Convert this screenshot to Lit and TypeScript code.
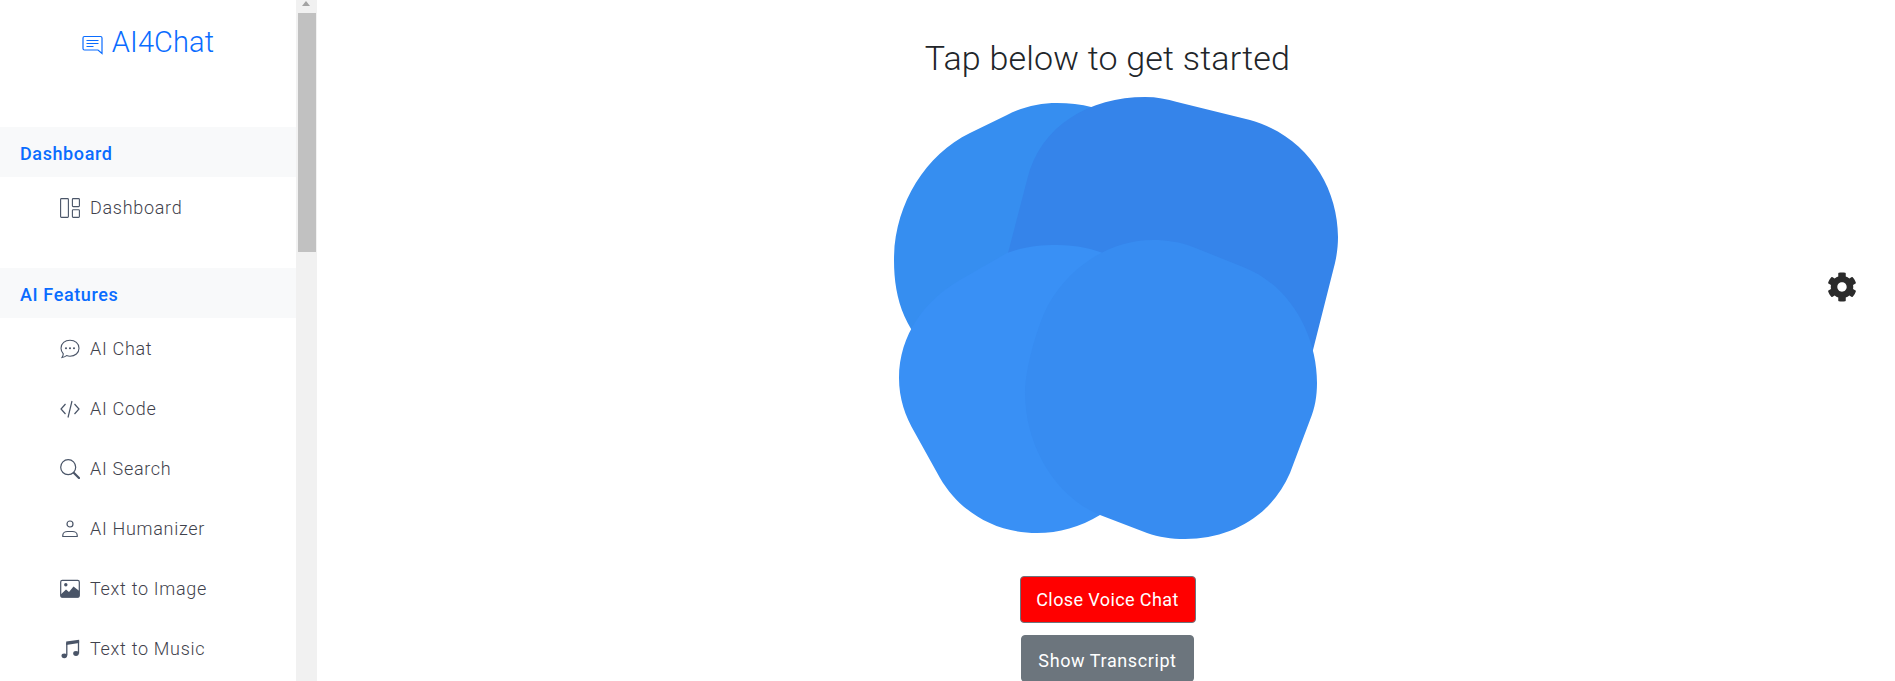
import { LitElement, html, css, svg } from 'lit';
import { customElement } from 'lit/decorators.js';

const icons: Record<string, unknown> = {
  dashboard: svg`<g fill="none" stroke="currentColor" stroke-width="1.100"><rect x=".6" y=".6" width="7.800" height="18.800" rx=".8"/><rect x="12.400" y=".6" width="7" height="8" rx=".8"/><rect x="12.400" y="11.800" width="7" height="7.600" rx=".8"/></g>`,
  chat: svg`<path fill="none" stroke="currentColor" stroke-width="1.100" d="M10 1.200c5 0 9 3.300 9 8s-4 8-9 8c-1.200 0-2.400-.2-3.400-.6-1.200.9-2.800 1.700-4.600 1.900.8-1.100 1.200-2.300 1.300-3.700C2 13.200 1 11.300 1 9.200c0-4.700 4-8 9-8z"/><circle cx="6" cy="9.200" r="1.050" fill="currentColor"/><circle cx="10" cy="9.200" r="1.050" fill="currentColor"/><circle cx="14" cy="9.200" r="1.050" fill="currentColor"/>`,
  code: svg`<path fill="none" stroke="currentColor" stroke-width="1.200" d="M5.500 5 1 10l4.500 5M14.500 5 19 10l-4.500 5M12 2 8 18.500"/>`,
  search: svg`<circle cx="8.200" cy="8.200" r="7.500" fill="none" stroke="currentColor" stroke-width="1.200"/><path stroke="currentColor" stroke-width="2.200" stroke-linecap="round" d="m14 14 5 5"/>`,
  user: svg`<circle cx="10" cy="5" r="3" fill="none" stroke="currentColor" stroke-width="1.200"/><path fill="none" stroke="currentColor" stroke-width="1.200" d="M2.800 17.500v-1.300c0-2.200 2.300-3.700 4.700-3.700h5c2.400 0 4.700 1.500 4.700 3.700v1.300z"/>`,
  image: svg`<rect x=".7" y="1.300" width="18.600" height="16.800" rx="1.600" fill="none" stroke="currentColor" stroke-width="1.200"/><path fill="currentColor" d="M.7 15.500 6 10.500l3 2.500 4.500-5.500 5.800 4.500v5a1.500 1.500 0 0 1-1.500 1.600H2.200a1.500 1.500 0 0 1-1.500-1.600z"/><circle cx="5.800" cy="5.800" r="1.700" fill="currentColor"/>`,
  music: svg`<path fill="none" stroke="currentColor" stroke-width="1.300" d="M6.800 16.500V4.200L18.500 2.400v12"/><path fill="currentColor" d="M6.200 2.600 19.100 .8v3.200L6.200 6z"/><ellipse cx="4.300" cy="16.800" rx="2.800" ry="2.400" fill="currentColor"/><ellipse cx="16" cy="14.500" rx="2.800" ry="2.400" fill="currentColor"/>`,
};

const groups = [
  { title: 'Dashboard', items: [{ label: 'Dashboard', icon: 'dashboard' }] },
  {
    title: 'AI Features',
    items: [
      { label: 'AI Chat', icon: 'chat' },
      { label: 'AI Code', icon: 'code' },
      { label: 'AI Search', icon: 'search' },
      { label: 'AI Humanizer', icon: 'user' },
      { label: 'Text to Image', icon: 'image' },
      { label: 'Text to Music', icon: 'music' },
    ],
  },
];

@customElement('app-root')
export class AppRoot extends LitElement {
  static styles = css`
    :host {
      display: flex;
      height: 681px;
      overflow: hidden;
      background: #fff;
      font-family: Roboto, 'Liberation Sans', sans-serif;
    }
    .sidebar {
      width: 296px;
      flex: none;
      height: 681px;
      overflow: hidden;
    }
    .brand {
      height: 127px;
      display: flex;
      justify-content: center;
      align-items: flex-start;
      padding-top: 25px;
      box-sizing: border-box;
      gap: 9px;
      color: #0a6cff;
      font-size: 29px;
      font-weight: 300;
      line-height: 34px;
      letter-spacing: 0.1px;
    }
    .brand svg {
      width: 21px;
      height: 21px;
      margin-top: 10px;
    }
    .group {
      margin-bottom: 31px;
    }
    .group-title {
      height: 50px;
      padding: 2px 0 0 20px;
      box-sizing: border-box;
      display: flex;
      align-items: center;
      background: #f8f9fa;
      color: #0a6cff;
      font-size: 18px;
      font-weight: 500;
      letter-spacing: 0.6px;
    }
    .item {
      height: 60px;
      padding: 1px 0 0 60px;
      box-sizing: border-box;
      display: flex;
      align-items: center;
      gap: 10px;
      color: #3f424c;
      font-size: 18px;
      font-weight: 300;
      letter-spacing: 0.7px;
    }
    .item svg {
      width: 20px;
      height: 20px;
      flex: none;
      color: #4a5568;
    }
    .track {
      width: 21px;
      flex: none;
      height: 681px;
      background: #f1f1f1;
      padding: 13px 1px 0 2px;
      box-sizing: border-box;
      position: relative;
    }
    .arrow {
      position: absolute;
      top: 1px;
      left: 6px;
      border: 4.500px solid transparent;
      border-top: 0;
      border-bottom: 5px solid #a3a3a3;
    }
    .thumb {
      height: 239px;
      background: #c1c1c1;
    }
    main {
      flex: 1;
      min-width: 0;
      position: relative;
      display: flex;
      flex-direction: column;
      align-items: center;
      padding-left: 3px;
    }
    h2 {
      margin: 38px 0 0;
      font-size: 34px;
      font-weight: 300;
      line-height: 41px;
      color: #212529;
      letter-spacing: 0.2px;
    }
    .blobs {
      width: 456px;
      height: 453px;
      margin: 13px 0 0 17px;
      flex: none;
      display: block;
    }
    .btn {
      flex: none;
      border: 1px solid #6c757d;
      border-radius: 4px;
      color: #fff;
      font: 400 18px/27px Roboto, 'Liberation Sans', sans-serif;
      letter-spacing: 0.4px;
      padding: 9px 0;
      box-sizing: border-box;
    }
    .btn.red {
      background: #ff0000;
      margin-top: 31px;
      width: 176px;
      height: 47px;
    }
    .btn.gray {
      background: #6c757d;
      margin-top: 12px;
      width: 173px;
      height: 47px;
      padding-top: 11px;
      letter-spacing: 0.6px;
    }
    .gear {
      position: absolute;
      left: 1510px;
      top: 272px;
      width: 30px;
      height: 30px;
      fill: #2b2b2b;
    }
  `;

  render() {
    return html`
      <aside class="sidebar">
        <div class="brand">
          <svg viewBox="0 0 21 21">
            <path fill="none" stroke="#0a6cff" stroke-width="1.200" d="M2.500 1.500h16a1.500 1.500 0 0 1 1.500 1.500v15.500l-4-3.500H2.500A1.500 1.500 0 0 1 1 13.500V3a1.500 1.500 0 0 1 1.500-1.500z"/>
            <path stroke="#0a6cff" stroke-width="1.200" d="M4.500 5.500h12M4.500 8.500h12M4.500 11.500h7"/>
          </svg>
          <span>AI4Chat</span>
        </div>
        ${groups.map(
          (g) => html`
            <div class="group">
              <div class="group-title">${g.title}</div>
              ${g.items.map(
                (it) => html`
                  <div class="item">
                    <svg viewBox="0 0 20 20">${icons[it.icon]}</svg>
                    <span>${it.label}</span>
                  </div>
                `
              )}
            </div>
          `
        )}
      </aside>
      <div class="track"><div class="arrow"></div><div class="thumb"></div></div>
      <main>
        <h2>Tap below to get started</h2>
        <svg class="blobs" viewBox="888 92 456 453">
          <path fill="#368ef0" d="M1057 103C1105 103 1150 125 1180 170C1210 230 1205 300 1160 350C1100 400 1000 390 945 365C905 335 894 300 894 260C894 205 925 155 970 133L1007 115C1022 107 1040 103 1057 103Z"/>
          <path fill="#3584ea" d="M1145 97C1157 97 1167 99 1177 102L1250 120C1305 135 1338 185 1338 237C1338 246 1337 254 1335 263L1313 350C1290 420 1200 440 1120 420C1040 390 1000 320 1008 253L1027 180C1040 125 1090 97 1145 97Z"/>
          <path fill="#3990f5" d="M1057 245C1105 245 1150 270 1175 315C1200 390 1180 480 1100 515C1080 527 1059 533 1037 533C995 533 960 512 940 478L915 433C905 416 899 398 899 378C899 335 925 300 960 280L1007 253C1022 247 1040 245 1057 245Z"/>
          <path fill="#378cf1" d="M1153 240C1167 240 1180 242 1193 247L1243 267C1290 285 1317 335 1317 383C1317 396 1315 408 1310 420L1290 473C1272 515 1232 539 1185 539C1171 539 1159 537 1147 533L1100 515C1055 497 1025 445 1025 393C1025 370 1036 330 1047 307C1068 268 1108 240 1153 240Z"/>
        </svg>
        <button class="btn red">Close Voice Chat</button>
        <button class="btn gray">Show Transcript</button>
        <svg class="gear" viewBox="0 0 512 512">
          <path d="M487.400 315.700l-42.600-24.600c4.300-23.200 4.300-47 0-70.200l42.600-24.600c4.900-2.800 7.100-8.600 5.500-14-11.100-35.600-30-67.800-54.700-94.600-3.800-4.100-10-5.100-14.800-2.300L380.800 110c-17.900-15.400-38.500-27.300-60.800-35.100V25.800c0-5.600-3.900-10.500-9.400-11.700-36.700-8.200-74.300-7.800-109.200 0-5.500 1.200-9.400 6.100-9.400 11.700V75c-22.200 7.900-42.800 19.800-60.800 35.100L88.700 85.500c-4.900-2.800-11-1.900-14.800 2.300-24.700 26.700-43.600 58.900-54.700 94.600-1.700 5.400.6 11.200 5.500 14L67.300 221c-4.300 23.200-4.300 47 0 70.200l-42.600 24.600c-4.900 2.800-7.100 8.600-5.500 14 11.100 35.600 30 67.800 54.700 94.600 3.800 4.100 10 5.100 14.800 2.300l42.600-24.600c17.900 15.400 38.500 27.300 60.800 35.100v49.200c0 5.600 3.900 10.500 9.400 11.700 36.700 8.200 74.300 7.800 109.200 0 5.500-1.200 9.400-6.100 9.400-11.700v-49.200c22.200-7.900 42.800-19.800 60.800-35.100l42.600 24.600c4.900 2.800 11 1.900 14.800-2.300 24.700-26.700 43.600-58.900 54.700-94.600 1.500-5.500-.7-11.300-5.600-14.100zM256 336c-44.100 0-80-35.900-80-80s35.900-80 80-80 80 35.900 80 80-35.900 80-80 80z"/>
        </svg>
      </main>
    `;
  }
}
